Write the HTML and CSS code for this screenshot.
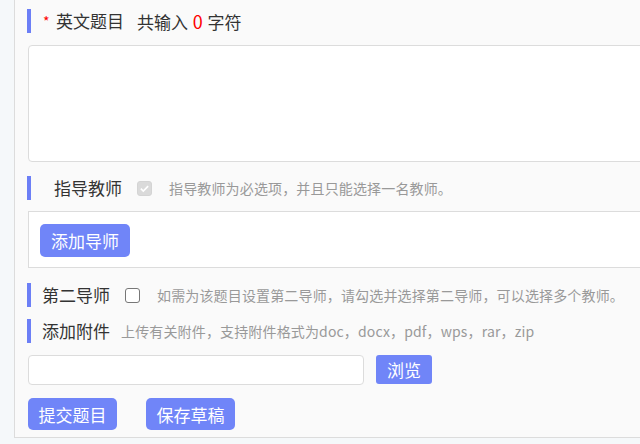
FILE: index.html
```html
<!DOCTYPE html>
<html lang="zh">
<head>
<meta charset="utf-8">
<link rel="stylesheet" href="styles.css">
</head>
<body>
<div class="panel">
  <div class="row">
    <span class="bar"></span>
    <span class="req">*</span>
    <span class="label">英文题目</span>
    <span class="count">共输入 <em>0</em> 字符</span>
  </div>
  <textarea class="area"></textarea>

  <div class="row r2">
    <span class="bar"></span>
    <span class="req hidden">*</span>
    <span class="label">指导教师</span>
    <span class="cb checked"><svg viewBox="0 0 16 16" width="16" height="16"><path d="M3.5 8.2l3 3L12.5 5" fill="none" stroke="#fff" stroke-width="2"/></svg></span>
    <span class="hint">指导教师为必选项，并且只能选择一名教师。</span>
  </div>
  <div class="box">
    <button class="btn add">添加导师</button>
  </div>

  <div class="row r3">
    <span class="bar"></span>
    <span class="label">第二导师</span>
    <span class="cb"></span>
    <span class="hint">如需为该题目设置第二导师，请勾选并选择第二导师，可以选择多个教师。</span>
  </div>

  <div class="row r4">
    <span class="bar"></span>
    <span class="label">添加附件</span>
    <span class="hint">上传有关附件，支持附件格式为doc，docx，pdf，wps，rar，zip</span>
  </div>

  <div class="filerow">
    <input class="file" type="text">
    <button class="btn browse">浏览</button>
  </div>

  <div class="actions">
    <button class="btn act">提交题目</button>
    <button class="btn act">保存草稿</button>
  </div>
</div>
</body>
</html>
```

FILE: styles.css
```css
html, body {
  margin: 0;
  padding: 0;
  background: #f5f8fa;
  font-family: "Noto Sans CJK SC", "Microsoft YaHei", sans-serif;
  overflow: hidden;
}
.panel {
  margin-left: 14px;
  width: 614px;
  height: 428px;
  padding: 9px 0 0 12px;
  background: #fafafa;
  border-left: 1px solid #dcdcdc;
  border-bottom: 1px solid #dcdcdc;
  display: flex;
  flex-direction: column;
  overflow: hidden;
}
.row {
  display: flex;
  align-items: center;
  height: 24px;
  color: #333;
  font-size: 17px;
  line-height: 24px;
  white-space: nowrap;
}
.bar {
  width: 4px;
  height: 24px;
  background: #6c7ff6;
  margin-right: 12px;
  flex: none;
}
.req {
  color: #f00;
  font-size: 14px;
  width: 8px;
  margin-right: 5px;
}
.req.hidden { visibility: hidden; margin-right: 3px; }
.label { color: #333; }
.count { margin-left: 13px; }
.count em { font-style: normal; color: #f00; font-size: 18px; padding: 0 1px; }
.hint {
  font-size: 14px;
  color: #999;
  letter-spacing: 0.15px;
}
.area {
  margin: 12px 0 0 1px;
  width: 640px;
  height: 117px;
  box-sizing: border-box;
  border: 1px solid #dcdcdc;
  border-radius: 4px;
  background: #fff;
  resize: none;
  display: block;
  flex: none;
}
.r2 { margin-top: 14px; }
.cb {
  width: 15px;
  height: 15px;
  box-sizing: border-box;
  border: 1px solid #777;
  border-radius: 3px;
  background: #fff;
  margin: 0 17px 0 15px;
  display: flex;
  align-items: center;
  justify-content: center;
  flex: none;
}
.cb.checked {
  border-color: #d4d4d4;
  background: #dadada;
}
.cb svg { width: 13px; height: 13px; }
.box {
  margin: 11px 0 0 1px;
  height: 57px;
  width: 640px;
  flex: none;
  box-sizing: border-box;
  border: 1px solid #dcdcdc;
  background: #fff;
  padding: 12px 0 0 11px;
}
.btn {
  border: none;
  background: #7085f8;
  color: #fff;
  font-family: inherit;
  font-size: 17px;
  border-radius: 5px;
  padding: 0;
  cursor: pointer;
}
.add { width: 90px; height: 33px; }
.r3 { margin-top: 15px; }
.r3 .bar, .r4 .bar { margin-right: 11px; }
.r4 { margin-top: 12px; }
.r4 .hint { margin-left: 11px; }
.filerow {
  margin: 12px 0 0 1px;
  display: flex;
  align-items: flex-start;
}
.file {
  width: 336px;
  height: 30px;
  box-sizing: border-box;
  border: 1px solid #dcdcdc;
  border-radius: 4px;
  background: #fff;
  margin: 0;
}
.browse {
  margin-left: 12px;
  width: 56px;
  height: 29px;
  border-radius: 3px;
}
.actions {
  margin: 13px 0 0 1px;
  display: flex;
  gap: 29px;
}
.act { width: 89px; height: 32px; }
```
